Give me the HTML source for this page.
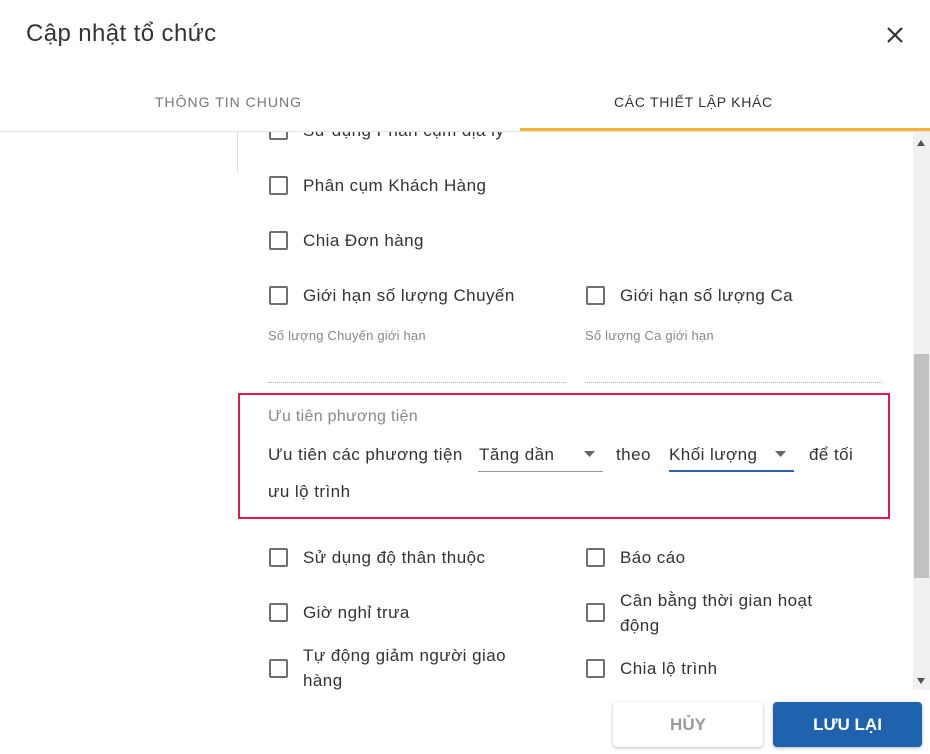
<!DOCTYPE html>
<html><head><meta charset="utf-8"><style>
*{box-sizing:border-box;margin:0;padding:0}
body{width:930px;height:754px;background:#fff;font-family:"Liberation Sans",Roboto,sans-serif;color:#333;position:relative;overflow:hidden}
.a{position:absolute;white-space:nowrap}
.cb{position:absolute;width:19px;height:19px;border:2px solid #6f6f6f;border-radius:2px}
.t{position:absolute;font-size:17px;color:#333;line-height:25px;white-space:nowrap;letter-spacing:0.45px}
.lbl{position:absolute;font-size:13px;color:#888;letter-spacing:0.2px}
</style></head><body>
<div class="a" style="left:26px;top:20px;font-size:24px;color:#333;letter-spacing:0.4px">Cập nhật tổ chức</div>
<svg class="a" style="left:886px;top:26px" width="18" height="18" viewBox="0 0 18 18"><path d="M2 2L16 16M16 2L2 16" stroke="#333" stroke-width="2.2"/></svg>
<div class="a" style="left:155px;top:94px;font-size:14px;letter-spacing:1px;color:#777">THÔNG TIN CHUNG</div>
<div class="a" style="left:614px;top:94px;font-size:14px;letter-spacing:0.7px;color:#333">CÁC THIẾT LẬP KHÁC</div>
<div class="a" style="left:0;top:131px;width:930px;height:1px;background:#e3e3e3"></div>
<div class="a" style="left:520px;top:128px;width:410px;height:3px;background:#f5b335"></div>
<div class="a" style="left:0;top:132px;width:930px;height:558px;overflow:hidden">
 <div class="a" style="left:237px;top:0;width:1px;height:40px;background:#ddd"></div>
 <div class="cb" style="left:269px;top:-11px"></div><div class="t" style="left:303px;top:-14px">Sử dụng Phân cụm địa lý</div>
 <div class="cb" style="left:269px;top:44px"></div><div class="t" style="left:303px;top:41px">Phân cụm Khách Hàng</div>
 <div class="cb" style="left:269px;top:99px"></div><div class="t" style="left:303px;top:96px">Chia Đơn hàng</div>
 <div class="cb" style="left:269px;top:154px"></div><div class="t" style="left:303px;top:151px">Giới hạn số lượng Chuyến</div>
 <div class="cb" style="left:586px;top:154px"></div><div class="t" style="left:620px;top:151px">Giới hạn số lượng Ca</div>
 <div class="lbl" style="left:268px;top:196px">Số lượng Chuyến giới hạn</div>
 <div class="lbl" style="left:585px;top:196px">Số lượng Ca giới hạn</div>
 <div class="a" style="left:268px;top:250px;width:298px;border-top:1px dotted #aaa"></div>
 <div class="a" style="left:585px;top:250px;width:297px;border-top:1px dotted #aaa"></div>
 <div class="a" style="left:238px;top:261px;width:652px;height:126px;border:2px solid #e8174a"></div>
 <div class="a" style="left:268px;top:276px;font-size:16px;color:#888;letter-spacing:0.3px">Ưu tiên phương tiện</div>
 <div class="t" style="left:268px;top:310px">Ưu tiên các phương tiện</div>
 <div class="t" style="left:479px;top:310px">Tăng dần</div>
 <div class="a" style="left:478px;top:339px;width:125px;height:1px;background:#999"></div>
 <svg class="a" style="left:584px;top:319px" width="12" height="6"><path d="M0 0H11L5.5 6Z" fill="#666"/></svg>
 <div class="t" style="left:616px;top:310px">theo</div>
 <div class="t" style="left:669px;top:310px">Khối lượng</div>
 <div class="a" style="left:669px;top:338px;width:125px;height:2px;background:#2c62b0"></div>
 <svg class="a" style="left:775px;top:319px" width="12" height="6"><path d="M0 0H11L5.5 6Z" fill="#666"/></svg>
 <div class="t" style="left:809px;top:310px">để tối</div>
 <div class="t" style="left:268px;top:347px">ưu lộ trình</div>
 <div class="cb" style="left:269px;top:416px"></div><div class="t" style="left:303px;top:413px">Sử dụng độ thân thuộc</div>
 <div class="cb" style="left:586px;top:416px"></div><div class="t" style="left:620px;top:413px">Báo cáo</div>
 <div class="cb" style="left:269px;top:471px"></div><div class="t" style="left:303px;top:468px">Giờ nghỉ trưa</div>
 <div class="cb" style="left:586px;top:471px"></div><div class="t" style="left:620px;top:456px">Cân bằng thời gian hoạt</div><div class="t" style="left:620px;top:481px">động</div>
 <div class="cb" style="left:269px;top:527px"></div><div class="t" style="left:303px;top:511px">Tự động giảm người giao</div><div class="t" style="left:303px;top:536px">hàng</div>
 <div class="cb" style="left:586px;top:527px"></div><div class="t" style="left:620px;top:524px">Chia lộ trình</div>
 <div class="a" style="left:913px;top:0;width:17px;height:558px;background:#f1f1f1"></div>
 <div class="a" style="left:914px;top:222px;width:15px;height:224px;background:#c1c1c1"></div>
 <svg class="a" style="left:917px;top:8px" width="8" height="6"><path d="M0 6H8L4 0Z" fill="#505050"/></svg>
 <svg class="a" style="left:917px;top:546px" width="8" height="6"><path d="M0 0H8L4 6Z" fill="#505050"/></svg>
</div>
<div class="a" style="left:613px;top:702px;width:150px;height:45px;border-radius:4px;background:#fff;box-shadow:0 1px 3px rgba(0,0,0,.25);font-size:17px;font-weight:bold;color:#9a9a9a;text-align:center;line-height:45px">HỦY</div>
<div class="a" style="left:773px;top:702px;width:149px;height:45px;border-radius:4px;background:#1f62ad;box-shadow:0 1px 3px rgba(0,0,0,.3);font-size:17px;font-weight:bold;color:#fff;text-align:center;line-height:45px">LƯU LẠI</div>
</body></html>
